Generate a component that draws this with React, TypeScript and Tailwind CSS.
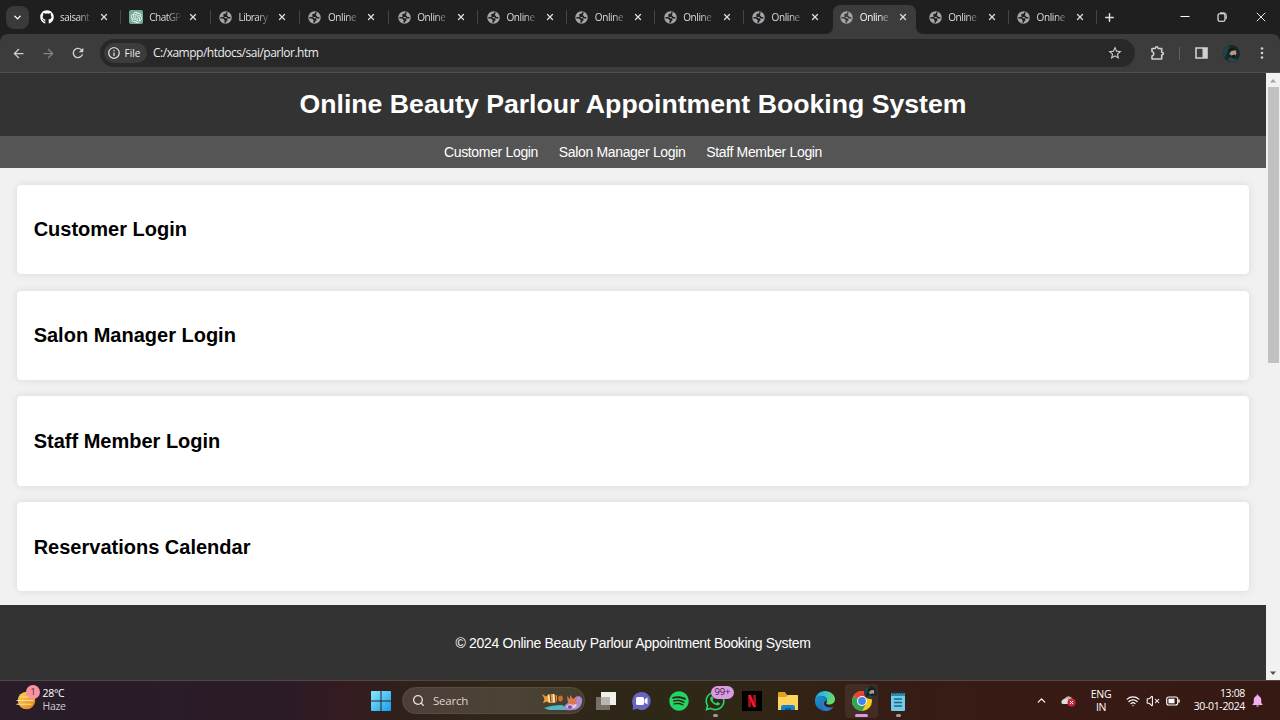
import React from "react";
import { FaGithub, FaSpotify, FaWhatsapp } from "react-icons/fa";
import { SiOpenai } from "react-icons/si";
import { MdStarBorder, MdRefresh, MdArrowBack, MdArrowForward, MdInfoOutline, MdNotifications } from "react-icons/md";
import { ChevronDown, ChevronUp, Plus, X, Search, Wifi, VolumeX } from "lucide-react";

type TabIcon = "github" | "openai" | "globe";
type Tab = { icon: TabIcon; title: string; active?: boolean; divider?: boolean };

const tabs: Tab[] = [
  { icon: "github", title: "saisant", divider: true },
  { icon: "openai", title: "ChatGP", divider: true },
  { icon: "globe", title: "Library", divider: true },
  { icon: "globe", title: "Online", divider: true },
  { icon: "globe", title: "Online", divider: true },
  { icon: "globe", title: "Online", divider: true },
  { icon: "globe", title: "Online", divider: true },
  { icon: "globe", title: "Online", divider: true },
  { icon: "globe", title: "Online" },
  { icon: "globe", title: "Online", active: true },
  { icon: "globe", title: "Online", divider: true },
  { icon: "globe", title: "Online", divider: true },
];

const sections = ["Customer Login", "Salon Manager Login", "Staff Member Login", "Reservations Calendar"];

function Globe({ gap }: { gap: string }) {
  return (
    <svg viewBox="0 0 24 24" className="size-[13px]">
      <circle cx="12" cy="12" r="11.5" fill="#a1a6ab" />
      <g fill="none" stroke={gap} strokeWidth="3" strokeLinejoin="round">
        <path d="M15 2.500 13 6.500H9.500V9.500H14.500L16.500 12.500H21" />
        <path d="M2.500 12.500H8.500L10.500 15H14V17L11.500 18.500V21.500" />
      </g>
    </svg>
  );
}

function Favicon({ icon, gap }: { icon: TabIcon; gap: string }) {
  if (icon === "github") return <FaGithub className="size-[14px] text-white" />;
  if (icon === "openai")
    return (
      <span className="flex size-[14px] items-center justify-center rounded-[2px] bg-[#74aa9c]">
        <SiOpenai className="size-[11px] text-white" />
      </span>
    );
  return <Globe gap={gap} />;
}

function BrowserTab({ tab, index }: { tab: Tab; index: number }) {
  return (
    <div className={`relative flex h-[34px] shrink-0 items-center ${index < 5 ? "w-[89.3px]" : "w-[88.35px]"}`}>
      {tab.active && (
        <svg className="absolute -left-[8px] top-[5px] h-[29px] w-[99px]" viewBox="0 0 99 29">
          <path d="M0 29Q8 29 8 21V8Q8 0 16 0H83Q91 0 91 8V21Q91 29 99 29Z" fill="#3c3c3c" />
        </svg>
      )}
      <div className="relative flex w-full items-center pl-[7px]">
        <span className="flex w-[14px] shrink-0 justify-center"><Favicon icon={tab.icon} gap={tab.active ? "#3c3c3c" : "#1f1f1f"} /></span>
        <span className={`ml-[6px] w-[33px] whitespace-nowrap text-[10px] leading-[14px] [mask-image:linear-gradient(to_right,black_55%,transparent_100%)] ${tab.title === "Online" ? "tracking-[-0.4px]" : "tracking-[-0.55px]"} ${tab.active ? "text-[#f8f8f8]" : "text-[#dcdcdc]"}`}>
          {tab.title}
        </span>
        <X className="ml-[5.500px] size-[10px] text-[#dedede]" strokeWidth={3} />
      </div>
      {tab.divider && <span className="absolute right-[1px] top-[10px] h-[14px] w-px bg-[#454545]" />}
    </div>
  );
}

function BrowserChrome() {
  return (
    <div className="bg-[#1f1f1f] text-white">
      <div className="flex h-[34px] items-center">
        <div className="ml-[6px] mr-[8px] flex size-[23px] shrink-0 items-center justify-center rounded-[8px] bg-[#3a3a3a]">
          <ChevronDown className="size-[11px]" strokeWidth={3} />
        </div>
        <div className="-ml-[4px] flex">
          {tabs.map((tab, i) => <BrowserTab key={i} tab={tab} index={i} />)}
        </div>
        <Plus className="ml-[5px] size-[13px] text-[#dedede]" strokeWidth={2.7} />
        <div className="ml-auto flex items-center">
          <svg viewBox="0 0 10 10" className="size-[10px]"><path d="M.5 4.500h9" stroke="white" strokeWidth="1" /></svg>
          <svg viewBox="0 0 10 10" className="ml-[27px] size-[10px]" fill="none" stroke="white" strokeWidth="1.100">
            <rect x="1" y="1.800" width="7" height="7.400" rx="1.500" />
            <path d="M3 .8h4Q9.300 .8 9.300 3.300V7" strokeWidth=".8" />
          </svg>
          <svg viewBox="0 0 10 10" className="ml-[29px] mr-[14px] size-[10px]"><path d="m.8 .8 8.400 8.400M9.200 .8.8 9.200" stroke="white" strokeWidth=".9" /></svg>
        </div>
      </div>
      <div className="flex h-[39px] items-center rounded-t-[8px] border-b border-[#505050] bg-[#3c3c3c] text-[#d0d0d0]">
        <MdArrowBack className="ml-[11px] size-[15px]" />
        <MdArrowForward className="ml-[15px] size-[15px] text-[#858585]" />
        <MdRefresh className="ml-[14px] size-[16px]" />
        <div className="ml-[14px] flex h-[28px] w-[1035px] items-center rounded-full bg-[#282828]">
          <div className="ml-[4px] flex h-[20px] w-[43px] items-center rounded-full bg-[#3c3c3c]">
            <MdInfoOutline className="ml-[3px] size-[14px] text-[#ececec]" />
            <span className="ml-[3.500px] text-[10px] font-medium text-[#eeeeee]">File</span>
          </div>
          <span className="ml-[6px] whitespace-nowrap text-[12px] tracking-[-0.49px] text-[#ececec]">C:/xampp/htdocs/sai/parlor.htm</span>
          <MdStarBorder className="ml-auto mr-[12px] size-[16px]" />
        </div>
        <svg viewBox="0 0 16 16" className="ml-[15px] size-[16px]" fill="none" stroke="#d0d0d0" strokeWidth="1.600" strokeLinejoin="round">
          <path d="M2 3.500h3.200q.2-1.700 1.500-1.700t1.500 1.700h3.500v3.600q1.700.2 1.700 1.500t-1.700 1.500V14H2v-3q1.800-.5 1.800-2.200T2 6.500Z" />
        </svg>
        <span className="ml-[13px] h-[13px] w-px bg-[#606060]" />
        <svg viewBox="0 0 13 12" className="ml-[15px] h-[12px] w-[13px]"><path d="M1 1h11v10H1z" fill="none" stroke="#d0d0d0" strokeWidth="1.6" /><path d="M7.500 1H12v10H7.500z" fill="#d0d0d0" /></svg>
        <Avatar className="ml-[15px] size-[17px]" />
        <svg viewBox="0 0 4 14" className="ml-[20px] h-[14px] w-[4px]" fill="#d0d0d0"><circle cx="2" cy="2.500" r="1.300" /><circle cx="2" cy="7" r="1.300" /><circle cx="2" cy="11.500" r="1.300" /></svg>
      </div>
    </div>
  );
}

function Avatar({ className }: { className: string }) {
  return (
    <svg viewBox="0 0 17 17" className={className}>
      <circle cx="8.500" cy="8.500" r="8.500" fill="#15292c" />
      <path d="M1 5Q3 1 7 1L3 10 2 13Q-1 9 1 5Z" fill="#1f4648" />
      <path d="M6 7.500 8 5.500l4.500-.5 1 3-1 3-3 .8L7.500 10Z" fill="#b99a7c" />
      <path d="M5 5Q8 1.500 13 4l-.5 1.300-4 .4L6.500 8.500ZM8 10.500l4-1 .8 1.500L10 13.500Z" fill="#171a1b" />
      <path d="M4 14 8 12l3 2 3-1-2 3q-5 2-8-2Z" fill="#23474b" />
    </svg>
  );
}

function WebPage() {
  return (
    <div className="flex h-[607px] font-['Liberation_Sans',Arial,sans-serif]">
      <div className="flex w-[1266px] flex-col bg-[#f1f1f1]">
        <header className="flex h-[63px] items-center justify-center bg-[#333333]">
          <h1 className="whitespace-nowrap text-[26.67px] font-bold leading-none text-white">Online Beauty Parlour Appointment Booking System</h1>
        </header>
        <nav className="flex h-[32px] items-center justify-center gap-[20.7px] bg-[#555555] text-[14px] tracking-[-0.335px] text-white">
          <a>Customer Login</a><a>Salon Manager Login</a><a>Staff Member Login</a>
        </nav>
        <main className="flex h-[437px] flex-col gap-[16.67px] px-[16.67px] pt-[16.85px]">
          {sections.map((s) => (
            <section key={s} className="flex h-[89.17px] shrink-0 items-center rounded-[4.17px] bg-white pl-[17px] shadow-[0_0_8.33px_rgba(0,0,0,0.1)]">
              <h2 className="text-[20px] font-bold text-black">{s}</h2>
            </section>
          ))}
        </main>
        <footer className="flex h-[75px] items-center justify-center bg-[#333333] pt-[1px] text-[14px] tracking-[-0.325px] text-white">
          <p>© 2024 Online Beauty Parlour Appointment Booking System</p>
        </footer>
      </div>
      <div className="flex w-[14px] flex-col items-center bg-[#f1f1f1]">
        <svg viewBox="0 0 14 14" className="size-[14px]"><path d="m7 6 3 3.500H4Z" fill="#a3a3a3" /></svg>
        <div className="h-[276px] w-[11px] bg-[#c1c1c1]" />
        <svg viewBox="0 0 14 14" className="mt-auto size-[14px]"><path d="m7 9 3-3.500H4Z" fill="#505050" /></svg>
      </div>
    </div>
  );
}

function SearchArt() {
  return (
    <svg viewBox="0 0 42 22" className="h-[22px] w-[42px]">
      <path d="M3 18q8-3 18-3l9 5H8Z" fill="#4db9c4" />
      <path d="m1 4 4 2.500q5-4.500 11-1v6q-5 3-10 0l-4 1.500 1.500-4Z" fill="#ef9b2c" />
      <path d="m7.500 4.500.8 8M12.500 4l.7 8.500" stroke="#f6eee4" strokeWidth="1.500" />
      <path d="m9.200 4.500.7 7.500M14.300 4.500l.5 7.500" stroke="#493326" strokeWidth=".8" />
      <ellipse cx="19.500" cy="8.500" rx="2.300" ry="3" fill="#d96928" />
      <path d="M23 17Q25 12 32 12q2-6 6-6 5 2 2 9-2 5-9 5-9 1-8-3Z" fill="#a78bd5" />
      <path d="M25 17q3-4 8-4 4 1 2 4-4 3-10 0Z" fill="#e9c3e2" />
      <path d="m26 6 3 3V5l3 4 4-3-1 5 2 2-5 2-5-2Z" fill="#d77a53" />
      <ellipse cx="29" cy="17" rx="2.200" ry="1.700" fill="#7554a0" />
    </svg>
  );
}

function ChromeLogo() {
  return (
    <svg viewBox="0 0 20 20" className="size-[20px]">
      <circle cx="10" cy="10" r="10" fill="#fbc918" />
      <path d="M10 10 1.340 5A10 10 0 0 1 18.660 5Z" fill="#e94335" />
      <path d="M1.340 5A10 10 0 0 0 10 20l4.330-7.500L10 10Z" fill="#34a353" />
      <circle cx="10" cy="10" r="5" fill="white" /><circle cx="10" cy="10" r="3.900" fill="#4285ed" />
    </svg>
  );
}

function EdgeLogo() {
  return (
    <svg viewBox="0 0 20 20" className="size-[20px]">
      <defs>
        <linearGradient id="edge-top" x2="1" y2=".3"><stop stopColor="#249bda" /><stop offset=".55" stopColor="#36c4d0" /><stop offset="1" stopColor="#67dc63" /></linearGradient>
        <linearGradient id="edge-low" x2="1" y2="1"><stop stopColor="#1b96d2" /><stop offset="1" stopColor="#1360aa" /></linearGradient>
      </defs>
      <path d="M0 10C0 4 4.500 0 10 0s10 4 10 8c0 4-3 5.500-6 5.500-3 0-3-1.400-2-2.800C13 8 10 5 7 5 3 5 0 7 0 10Z" fill="url(#edge-top)" />
      <path d="M0 10C0 6 3.500 4.500 7 5c4 .5 5.500 4 4.500 5.500C9.500 9 7 11 7.500 14c.5 4 5 5 9 3.500A10 10 0 0 1 0 10Z" fill="url(#edge-low)" />
      <path d="M8.500 9C5.500 11 5 18 11 20c4 0 6.500-2.500 7.500-4.500-3 2-9 1-9.500-2.500-.2-1.500.5-2.500 1.500-3.300Z" fill="#2a79c8" />
    </svg>
  );
}

function TaskItem({ children, marker, active }: { children: React.ReactNode; marker?: boolean; active?: boolean }) {
  return (
    <div className={`relative flex h-[34px] w-[33px] shrink-0 items-center justify-center rounded-[4px] ${active ? "bg-[#ffffff12]" : ""}`}>
      {children}
      {marker && <span className={`absolute bottom-[1px] h-[3px] rounded-full ${active ? "w-[13px] bg-[#d59be0]" : "w-[5px] bg-[#a39a98]"}`} />}
    </div>
  );
}

function Taskbar() {
  return (
    <div className="flex h-[40px] items-center border-t border-[#504746] bg-[linear-gradient(90deg,#281d29_0%,#2b1b27_22%,#351b20_27%,#30201b_31%,#302718_38%,#2e2818_53%,#322515_61%,#351d15_68%,#381b15_76%,#361912_100%)] font-['Open_Sans','Noto_Sans',sans-serif] text-white">
      <div className="flex w-[370px] items-center pl-[16px]">
        <div className="relative -mt-[2px] size-[24px]">
          <svg viewBox="0 0 24 24" className="size-[24px]">
            <defs><linearGradient id="sun" y2="1"><stop stopColor="#ffd650" /><stop offset="1" stopColor="#e97e14" /></linearGradient></defs>
            <circle cx="10.500" cy="12.500" r="8.700" fill="url(#sun)" />
            <path d="M6 9h12M1 12.500h16M1 16.300h14" stroke="#f3dfaf" strokeWidth="1.100" strokeLinecap="round" />
          </svg>
          <span className="absolute -top-[3px] right-0 flex size-[14px] items-center justify-center rounded-full bg-[#f894a0] text-[9px] text-[#442a30]">1</span>
        </div>
        <div className="-mt-[1px] ml-[2.500px] text-[10.5px] leading-[13px] tracking-[-0.3px]"><div>28°C</div><div className="text-[#d0c8ce]">Haze</div></div>
      </div>
      <svg viewBox="0 0 20 20" className="ml-[1px] size-[20px]">
        <defs><linearGradient id="windows" x2="1" y2="1"><stop stopColor="#8be7ff" /><stop offset="1" stopColor="#149eed" /></linearGradient></defs>
        <path d="M0 1Q0 0 1 0h8.500v9.500H0ZM10.500 0H19q1 0 1 1v8.500h-9.500ZM0 10.500h9.500V20H1q-1 0-1-1ZM10.500 10.500H20V19q0 1-1 1h-8.500Z" fill="url(#windows)" />
      </svg>
      <div className="ml-[11px] flex h-[27px] w-[183px] items-center rounded-full border border-[#5a4b42] bg-[linear-gradient(90deg,#4d3e39,#4b4335_60%,#443e2c)] pl-[9px]">
        <Search className="size-[13px] text-[#e8e3df]" strokeWidth={2.4} />
        <span className="ml-[8px] text-[11.5px] tracking-[-0.2px] text-[#ddd6cf]">Search</span>
        <span className="ml-auto mr-[1px]"><SearchArt /></span>
      </div>
      <div className="ml-[4px] flex w-[330px] gap-[3.6px]">
        <TaskItem><svg viewBox="0 0 22 20" className="h-[20px] w-[22px]"><path d="M6 1h15v13H6z" fill="#f0f0ed" /><path d="M1 6h14v13H1z" fill="#777067" /><path d="M6 6h9v8H6z" fill="#b9b6b0" /></svg></TaskItem>
        <TaskItem><svg viewBox="0 0 20 20" className="size-[20px]"><path d="M10 1a9 9 0 1 1-5 16.700L.8 19 1 14.500A9.500 9.500 0 0 1 10 1Z" fill="#6865c2" /><rect x="4" y="6" width="8" height="8" rx="1.500" fill="white" /><path d="m12.500 8.500 3-2v7l-3-2Z" fill="white" /></svg></TaskItem>
        <TaskItem><FaSpotify className="size-[20px] text-[#22d665]" /></TaskItem>
        <TaskItem marker>
          <FaWhatsapp className="size-[22px] text-[#26d768]" />
          <span className="absolute left-[12px] top-[2px] flex h-[13px] w-[23px] items-center justify-center rounded-full bg-[#d99be4] text-[9.5px] tracking-[-0.2px] text-[#382038]">99+</span>
        </TaskItem>
        <TaskItem><svg viewBox="0 0 20 20" className="size-[20px]"><path d="M0 0h20v20H0z" fill="black" /><path d="M6.200 4h2.700v12l-2.700.3ZM11.200 4h2.700v12.300l-2.700-.3Z" fill="#b40e19" /><path d="M6.200 4h2.700l5 12.300-2.800-.3Z" fill="#ed1b2d" /></svg></TaskItem>
        <TaskItem><svg viewBox="0 0 22 20" className="h-[20px] w-[22px]"><path d="M1 2q0-1 1-1h6l2 3h10q1 0 1 1v5H1Z" fill="#e3a21d" /><path d="M1 6h8l2-2h9q1 0 1 1v14H1Z" fill="#ffd45c" /><path d="M4 19v-3q0-2 2-2h10q2 0 2 2v3Z" fill="#1685ce" /><path d="M8 19v-2h6v2Z" fill="#0e5b9b" /></svg></TaskItem>
        <TaskItem><EdgeLogo /></TaskItem>
        <TaskItem marker active><ChromeLogo /><Avatar className="absolute right-[1px] top-[2px] size-[13px]" /></TaskItem>
        <TaskItem marker><svg viewBox="0 0 16 20" className="h-[20px] w-[16px]"><path d="M1 2h14v17q0 1-1 1H2q-1 0-1-1Z" fill="#72cce6" /><path d="M1 2h14v3H1Z" fill="#2b8eaf" /><path d="M3 0v3M5.500 0v3M8 0v3M10.500 0v3M13 0v3" stroke="#183e50" strokeWidth="1" /><path d="M4 8h8M4 11.500h8M4 15h8" stroke="#176581" strokeWidth="1.300" /></svg></TaskItem>
      </div>
      <div className="ml-auto flex items-center pr-[15px] text-[10.5px] leading-[13px]">
        <ChevronUp className="size-[13px]" strokeWidth={2.2} />
        <svg viewBox="0 0 15 12" className="ml-[13px] h-[12px] w-[15px]"><path d="M1 9Q-1 5 3 4q4-5 8-1l3 6Z" fill="#bcb4b1" /><path d="M3 4q4-1 8 5H2Q-1 7 3 4Z" fill="#e1dcda" /><circle cx="10.500" cy="7.500" r="4" fill="#cf2637" /><path d="m9 6 3 3m0-3L9 9" stroke="white" strokeWidth="1" /></svg>
        <div className="ml-[14px] w-[22px] text-center tracking-[-0.3px]"><div>ENG</div><div>IN</div></div>
        <Wifi className="ml-[14px] size-[14px]" strokeWidth={2.2} />
        <VolumeX className="ml-[6px] size-[14px]" strokeWidth={1.800} />
        <svg viewBox="0 0 15 10" className="ml-[6px] h-[10px] w-[15px]"><rect x=".7" y="1" width="11" height="8" rx="2" fill="none" stroke="white" strokeWidth="1.100" /><rect x="2.500" y="2.700" width="6" height="4.600" fill="white" /><path d="M13 3.500v3" stroke="white" strokeWidth="1.500" /></svg>
        <div className="-mt-[1px] ml-[11px] flex w-[53px] flex-col items-end whitespace-nowrap tracking-[-0.35px]"><div>13:08</div><div>30-01-2024</div></div>
        <MdNotifications className="ml-[5px] size-[15px] text-[#f0b1f2]" />
      </div>
    </div>
  );
}

export default function App() {
  return (
    <div className="flex h-[720px] w-[1280px] flex-col overflow-hidden font-['Open_Sans','Noto_Sans',sans-serif]">
      <BrowserChrome />
      <WebPage />
      <Taskbar />
    </div>
  );
}
